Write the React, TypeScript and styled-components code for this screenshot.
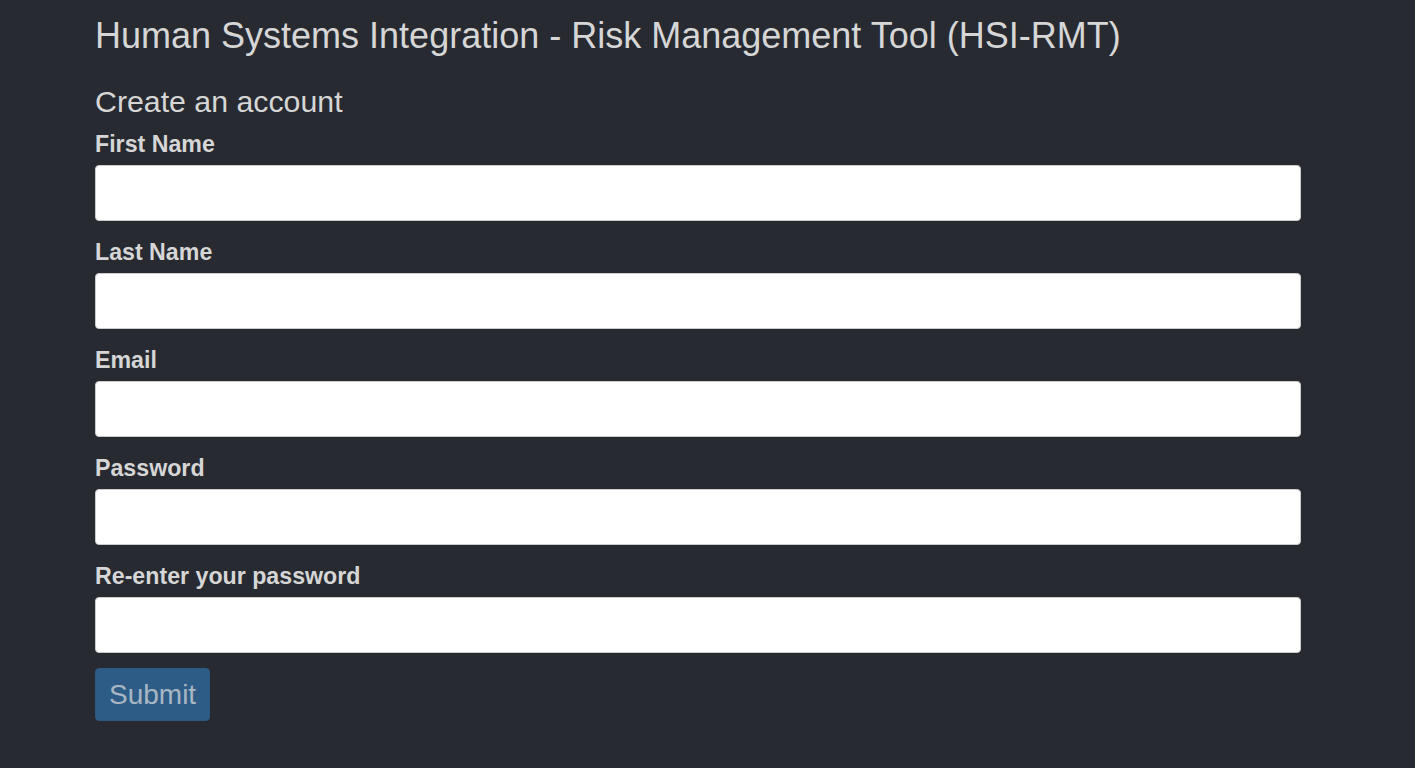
import React from "react";
import styled, { createGlobalStyle } from "styled-components";

const Global = createGlobalStyle`
  html, body {
    margin: 0;
    padding: 0;
    background: #272a31;
  }
  body {
    font-family: "Liberation Sans", Arial, Helvetica, sans-serif;
    color: #d6d6d6;
    min-height: 768px;
  }
  * { box-sizing: border-box; }
`;

const Page = styled.div`
  padding: 16px 0 40px 95px;
  width: 1301px;
`;

const Title = styled.h1`
  margin: 0;
  font-size: 36px;
  line-height: 40px;
  font-weight: 400;
  color: #d6d6d6;
`;

const Subtitle = styled.h2`
  margin: 29px 0 0;
  font-size: 30.3px;
  line-height: 33px;
  font-weight: 400;
  color: #d6d6d6;
`;

const Form = styled.form`
  display: flex;
  flex-direction: column;
  margin-top: 13px;
`;

const Field = styled.div`
  display: flex;
  flex-direction: column;
  gap: 7px;
  margin-bottom: 18px;
  &:last-of-type {
    margin-bottom: 15px;
  }
`;

const Label = styled.label`
  font-size: 23.2px;
  line-height: 27px;
  font-weight: 700;
  color: #d6d6d6;
`;

const Input = styled.input`
  display: block;
  width: 100%;
  height: 56px;
  padding: 6px 12px;
  font-size: 20px;
  font-family: inherit;
  background: #ffffff;
  border: 1px solid #cccccc;
  border-radius: 4px;
  outline: none;
`;

const SubmitButton = styled.button`
  align-self: flex-start;
  font-family: inherit;
  font-size: 28px;
  line-height: 37px;
  padding: 7px 13px;
  background: #2d5d87;
  color: #a9b6c3;
  border: 1px solid #2a5880;
  border-radius: 4px;
  cursor: pointer;
`;

const fields = [
  { id: "first", label: "First Name", type: "text" },
  { id: "last", label: "Last Name", type: "text" },
  { id: "email", label: "Email", type: "email" },
  { id: "password", label: "Password", type: "password" },
  { id: "password2", label: "Re-enter your password", type: "password" },
];

export default function App() {
  return (
    <>
      <Global />
      <Page>
        <Title>Human Systems Integration - Risk Management Tool (HSI-RMT)</Title>
        <Subtitle>Create an account</Subtitle>
        <Form onSubmit={(e) => e.preventDefault()}>
          {fields.map((f) => (
            <Field key={f.id}>
              <Label htmlFor={f.id}>{f.label}</Label>
              <Input id={f.id} type={f.type} />
            </Field>
          ))}
          <SubmitButton type="submit">Submit</SubmitButton>
        </Form>
      </Page>
    </>
  );
}
